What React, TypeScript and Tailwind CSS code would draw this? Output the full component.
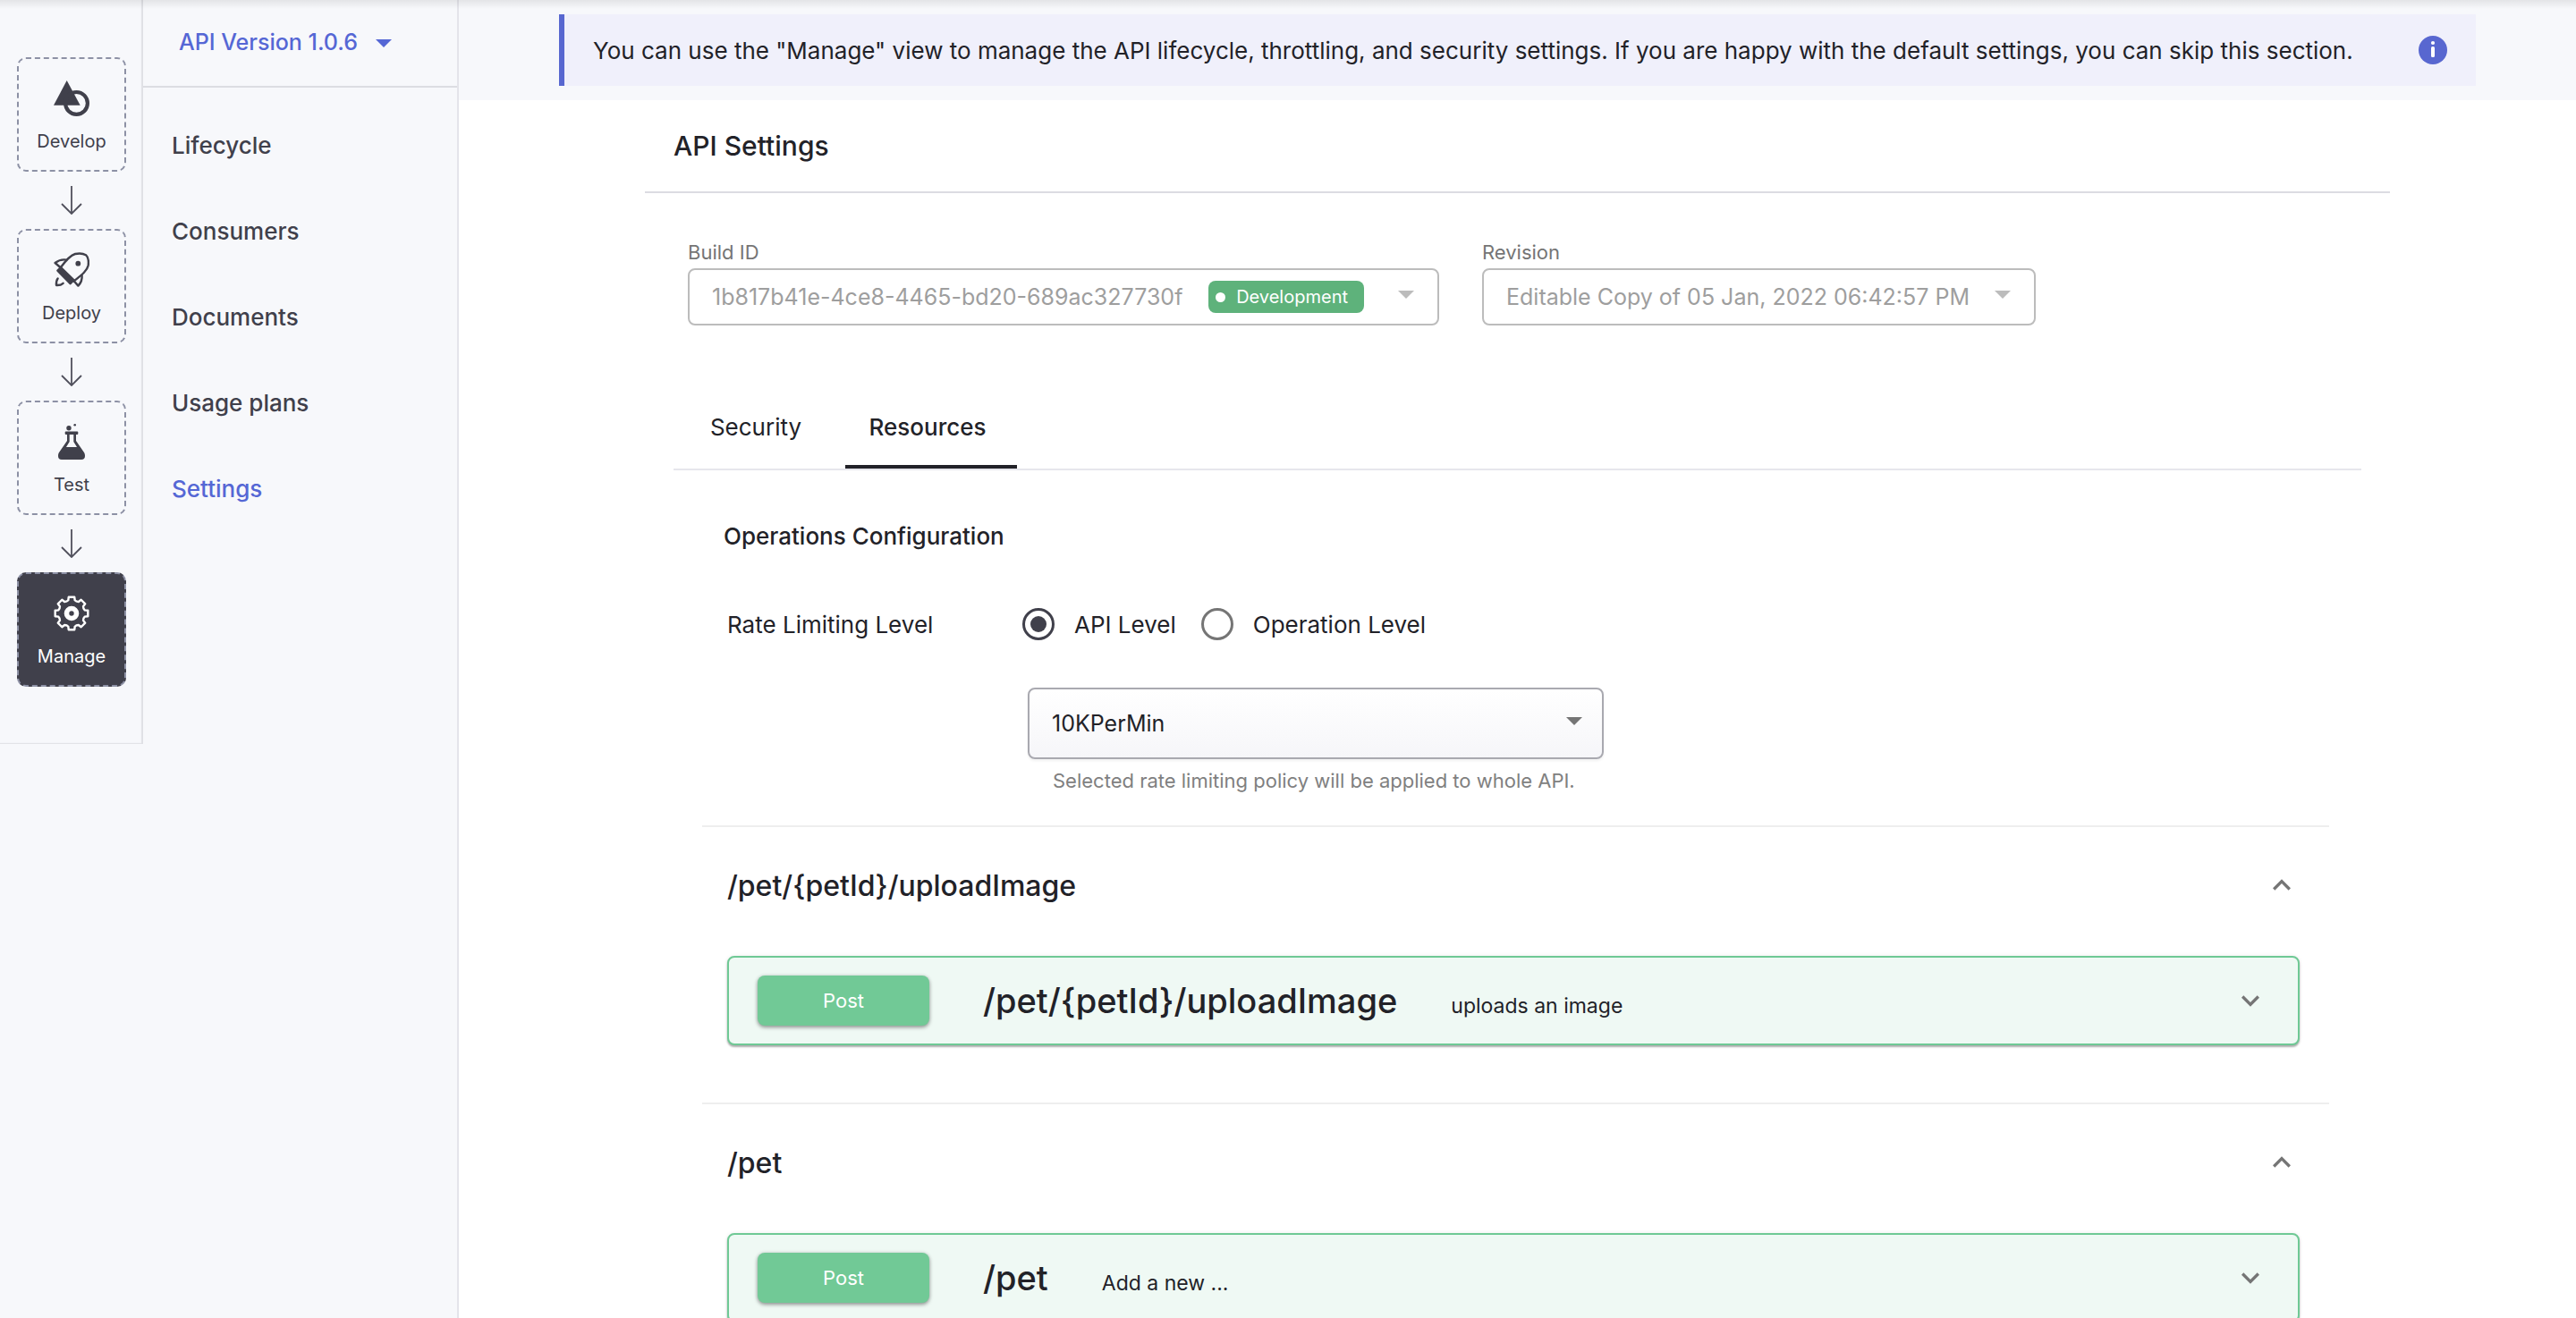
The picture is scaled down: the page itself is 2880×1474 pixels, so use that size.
import { useState, type ReactNode } from "react";

/* ---------- icons ---------- */

function DevelopIcon() {
  return (
    <svg viewBox="0 0 40 40" className="size-10" fill="currentColor" aria-hidden="true">
      <path d="M14.7 0 L29.7 27.7 H0 Z" />
      <circle cx="25.5" cy="25.4" r="12.4" fill="none" stroke="currentColor" strokeWidth="4.2" />
    </svg>
  );
}

function DeployIcon() {
  return (
    <svg
      viewBox="0 0 40 40"
      className="size-10"
      fill="none"
      stroke="currentColor"
      strokeWidth="2.4"
      strokeLinecap="round"
      strokeLinejoin="round"
      aria-hidden="true"
    >
      <path d="M7.5 17.5 C13 10 18.5 3.5 24 2 C28 1.2 33 1.4 36 3.2 C38.6 5.6 39.2 11 38.6 15 C37.4 21 30.5 26 22.5 32.5" />
      <path d="M14.5 8.6 C9.5 7.8 5.5 9 1.6 12 L8 17.5" />
      <path d="M31.6 26 C32 30.5 30.4 34.5 27.4 37.6 L22.5 32" />
      <path d="M4.6 29.4 C3 31.4 2.8 34 3 37 C6.4 37.2 8.6 36.6 10.6 34.8" />
      <path d="M4.4 20.6 L8 17 L22.4 31.2 L18.6 35.2 Z" fill="currentColor" />
      <circle cx="27.3" cy="12.7" r="2.9" fill="currentColor" stroke="none" />
    </svg>
  );
}

function TestIcon() {
  return (
    <svg viewBox="0 0 40 40" className="size-10" fill="currentColor" aria-hidden="true">
      <circle cx="17" cy="4.7" r="2.7" />
      <circle cx="23.7" cy="1.3" r="1.3" />
      <rect x="12.7" y="8.6" width="14.6" height="3.4" rx="1" />
      <path
        fillRule="evenodd"
        d="M15 11 V19 L6 32 C5.2 33.4 5 34.6 5 36 C5 38.4 6.4 40 9 40 H31 C33.6 40 35 38.4 35 36 C35 34.6 34.8 33.4 34 32 L25 19 V11 Z M17.7 12 H22.3 V20 L26 26 H14 L17.7 20 Z"
      />
    </svg>
  );
}

const GEAR_PATH =
  Array.from({ length: 8 }, (_, i) => {
    const point = (radius: number, degrees: number) => {
      const a = ((i * 45 + degrees - 90) * Math.PI) / 180;
      return `${(20 + radius * Math.cos(a)).toFixed(2)} ${(20 + radius * Math.sin(a)).toFixed(2)}`;
    };
    return `${i === 0 ? "M" : "L"}${point(15.2, -14)} L${point(18.6, -10)} L${point(18.6, 10)} L${point(15.2, 14)} Q${point(14, 22.5)} ${point(15.2, 31)}`;
  }).join(" ") + " Z";

function ManageIcon() {
  return (
    <svg viewBox="0 0 40 40" className="size-10" fill="none" stroke="currentColor" aria-hidden="true">
      <path d={GEAR_PATH} strokeWidth="2.4" strokeLinejoin="round" />
      <circle cx="20" cy="20" r="5.5" strokeWidth="5.6" />
    </svg>
  );
}

function StageArrow() {
  return (
    <svg
      viewBox="0 0 24 32"
      className="h-8 w-6 text-[#50505c]"
      fill="none"
      stroke="currentColor"
      strokeWidth="1.8"
      aria-hidden="true"
    >
      <path d="M12 0 V31 M1 20 L12 31 L23 20" />
    </svg>
  );
}

function Caret({ className }: { className: string }) {
  return (
    <svg viewBox="0 0 18 9" className={className} fill="currentColor" aria-hidden="true">
      <path d="M0 0 H18 L9 9 Z" />
    </svg>
  );
}

function ChevronDown() {
  return (
    <svg viewBox="0 0 24 24" className="size-10 text-[#757575]" fill="currentColor" aria-hidden="true">
      <path d="M16.59 8.59 12 13.17 7.41 8.59 6 10l6 6 6-6z" />
    </svg>
  );
}

function ChevronUp() {
  return (
    <svg viewBox="0 0 24 24" className="size-10 text-[#757575]" fill="currentColor" aria-hidden="true">
      <path d="m12 7.4-6 6 1.41 1.41L12 10.23l4.59 4.58L18 13.4z" />
    </svg>
  );
}

function InfoIcon() {
  return (
    <svg viewBox="0 0 32 32" className="size-8 shrink-0" aria-hidden="true">
      <circle cx="16" cy="16" r="16" fill="#5867d0" />
      <circle cx="16" cy="8" r="2.1" fill="#fff" />
      <rect x="14" y="12" width="4" height="12" rx="1.6" fill="#fff" />
    </svg>
  );
}

/* ---------- sidebar ---------- */

const STAGES: { name: string; icon: ReactNode }[] = [
  { name: "Develop", icon: <DevelopIcon /> },
  { name: "Deploy", icon: <DeployIcon /> },
  { name: "Test", icon: <TestIcon /> },
  { name: "Manage", icon: <ManageIcon /> },
];

function StageBar() {
  return (
    <ol className="flex w-40 shrink-0 flex-col items-center self-start pt-16 pb-16 shadow-[inset_-2px_-1px_1px_#dfe0e5]">
      {STAGES.map(({ name, icon }, i) => (
        <li key={name} className="flex flex-col items-center">
          {i > 0 && (
            <div className="py-4">
              <StageArrow />
            </div>
          )}
          <button
            type="button"
            className={
              name === "Manage"
                ? "flex h-32 w-[122px] flex-col items-center gap-3.5 rounded-[10px] border-2 border-dashed border-[#8d91a5] bg-[#40404b] pt-6 text-white"
                : "flex h-32 w-[122px] flex-col items-center gap-3.5 rounded-[10px] border-2 border-dashed border-[#8d91a5] pt-6 text-[#40404b]"
            }
          >
            {icon}
            <span className="text-[20px] leading-7">{name}</span>
          </button>
        </li>
      ))}
    </ol>
  );
}

const NAV_ITEMS = ["Lifecycle", "Consumers", "Documents", "Usage plans", "Settings"];

function SideNav() {
  return (
    <div className="flex w-[353px] shrink-0 flex-col border-r-2 border-[#e4e4ea]">
      <button
        type="button"
        className="flex h-[98px] items-center gap-5 border-b-2 border-[#dcdde2] pl-10 text-[25px] font-medium text-[#5567d5]"
      >
        API Version 1.0.6
        <Caret className="h-[9px] w-[18px]" />
      </button>
      <nav className="flex flex-col pt-4">
        {NAV_ITEMS.map((item) => (
          <a
            key={item}
            href="#"
            className={
              item === "Settings"
                ? "flex h-24 items-center pl-8 text-[26px] font-medium text-[#5567d5]"
                : "flex h-24 items-center pl-8 text-[26px] font-medium text-[#40404b]"
            }
          >
            {item}
          </a>
        ))}
      </nav>
    </div>
  );
}

/* ---------- main content ---------- */

function BuildFields() {
  return (
    <div className="flex gap-12 pt-12 pl-12 text-[22px] text-[#757575]">
      <div className="w-210">
        <label htmlFor="build" className="block pt-0.5 pb-0.5 leading-8">
          Build ID
        </label>
        <div className="relative">
          <select
            id="build"
            disabled
            className="h-16 w-full appearance-none rounded-lg border-2 border-[#bcbcbc] bg-white pt-0.5 pl-[25px] text-[25px] text-[#9e9e9e] opacity-100"
          >
            <option>1b817b41e-4ce8-4465-bd20-689ac327730f</option>
          </select>
          <span className="absolute top-3.5 right-[84px] flex h-9 items-center gap-3 rounded-lg bg-[#5eb27b] pr-4.5 pl-2 text-[20px] text-white">
            <span className="size-[11px] rounded-full bg-white" />
            Development
          </span>
          <Caret className="pointer-events-none absolute top-[25px] right-7 h-[9px] w-[18px] text-[#bcbcbc]" />
        </div>
      </div>
      <div className="w-[619px]">
        <label htmlFor="revision" className="block pt-0.5 pb-0.5 leading-8">
          Revision
        </label>
        <div className="relative">
          <select
            id="revision"
            disabled
            className="h-16 w-full appearance-none rounded-lg border-2 border-[#bcbcbc] bg-white pt-0.5 pl-[25px] text-[25px] text-[#9e9e9e] opacity-100"
          >
            <option>Editable Copy of 05 Jan, 2022 06:42:57 PM</option>
          </select>
          <Caret className="pointer-events-none absolute top-[25px] right-7 h-[9px] w-[18px] text-[#bcbcbc]" />
        </div>
      </div>
    </div>
  );
}

function RateLimiting() {
  const [level, setLevel] = useState("API Level");
  return (
    <div className="pt-13.5">
      <h3 className="pl-14 text-[26px] leading-10 font-medium">Operations Configuration</h3>
      <div className="mt-14.5 flex h-10 items-center pl-15 text-[26px]" role="radiogroup" aria-labelledby="rate-level">
        <span id="rate-level" className="w-[330px]">
          Rate Limiting Level
        </span>
        <div className="flex gap-7">
          {["API Level", "Operation Level"].map((name) => (
            <label key={name} className="flex items-center gap-[22px]">
              <input
                type="radio"
                name="level"
                checked={level === name}
                onChange={() => setLevel(name)}
                className="grid size-9 appearance-none place-items-center rounded-full border-3 border-[#757575] before:size-[18px] before:rounded-full checked:border-[#40404b] checked:before:bg-[#40404b]"
              />
              {name}
            </label>
          ))}
        </div>
      </div>
      <div className="mt-[51px] ml-[396px] w-[644px]">
        <div className="relative">
          <select
            aria-label="Rate limiting policy"
            aria-describedby="policy-help"
            className="h-20 w-full appearance-none rounded-lg border-2 border-[#a9a9b0] bg-linear-to-b from-white to-[#f6f6f9] pt-0.5 pl-[25px] text-[25px] shadow-[0_2px_3px_rgba(0,0,0,0.06)]"
          >
            <option>10KPerMin</option>
          </select>
          <Caret className="pointer-events-none absolute top-[33px] right-6 h-[9px] w-[18px] text-[#757575]" />
        </div>
        <p id="policy-help" className="mt-2 pl-7 text-[22px] leading-8 text-[#808080]">
          Selected rate limiting policy will be applied to whole API.
        </p>
      </div>
    </div>
  );
}

const RESOURCES = [
  { path: "/pet/{petId}/uploadImage", description: "uploads an image" },
  { path: "/pet", description: "Add a new ..." },
];

function Resource({ path, description }: { path: string; description: string }) {
  return (
    <section className="mr-9 ml-8 border-t-2 border-[#eeeeee] pr-[33px] pb-16 pl-7">
      <button type="button" className="flex h-33 w-full items-center justify-between text-[32px] font-medium">
        {path}
        <ChevronUp />
      </button>
      <div className="mt-3 flex h-25 items-center rounded-lg border-2 border-[#6fc995] bg-[#eff9f4] pr-[33px] pl-8 shadow-[0_2px_2px_rgba(0,0,0,0.3),0_0_4px_rgba(0,0,0,0.08)]">
        <button
          type="button"
          className="h-14 w-48 rounded-lg bg-[#71c996] text-[22px] text-white shadow-[0_2px_4px_rgba(0,0,0,0.38),0_0_4px_rgba(0,0,0,0.1)]"
        >
          Post
        </button>
        <div className="ml-15 flex grow items-baseline gap-15">
          <span className="text-[38px] font-medium">{path}</span>
          <span className="text-[23px]">{description}</span>
        </div>
        <button type="button" aria-label={`Expand ${path}`}>
          <ChevronDown />
        </button>
      </div>
    </section>
  );
}

export default function App() {
  return (
    <div className="relative flex h-screen overflow-hidden bg-white font-['Inter',sans-serif] text-[#222228]">
      <div className="pointer-events-none absolute inset-x-0 top-0 z-10 h-2.5 bg-linear-to-b from-black/8 to-transparent" />
      <aside className="flex shrink-0 bg-[#f7f8fb]">
        <StageBar />
        <SideNav />
      </aside>
      <main className="min-w-0 grow">
        <div className="bg-[#f7f8fb] px-28 py-4">
          <div className="flex h-20 items-center justify-between border-l-6 border-[#5867d0] bg-[#f0f0fb] px-8">
            <p className="text-[26px]">
              You can use the "Manage" view to manage the API lifecycle, throttling, and security settings. If you are
              happy with the default settings, you can skip this section.
            </p>
            <InfoIcon />
          </div>
        </div>
        <div className="px-52">
          <h2 className="flex h-[104px] items-center border-b-2 border-[#dcdce2] pl-8 text-[30px] font-medium">
            API Settings
          </h2>
          <BuildFields />
          <div className="mx-8 mt-17">
            <div className="flex border-b-2 border-[#e6e6ec] text-[26px]" role="tablist">
              <button
                type="button"
                role="tab"
                aria-selected="false"
                className="h-23 w-48 border-y-4 border-transparent pr-2 pb-0.5"
              >
                Security
              </button>
              <button
                type="button"
                role="tab"
                aria-selected="true"
                className="h-23 w-48 border-y-4 border-t-transparent border-b-[#222228] pr-2 pb-0.5 font-medium"
              >
                Resources
              </button>
            </div>
            <RateLimiting />
            <div className="mt-8.5">
              {RESOURCES.map((resource) => (
                <Resource key={resource.path} {...resource} />
              ))}
            </div>
          </div>
        </div>
      </main>
    </div>
  );
}
